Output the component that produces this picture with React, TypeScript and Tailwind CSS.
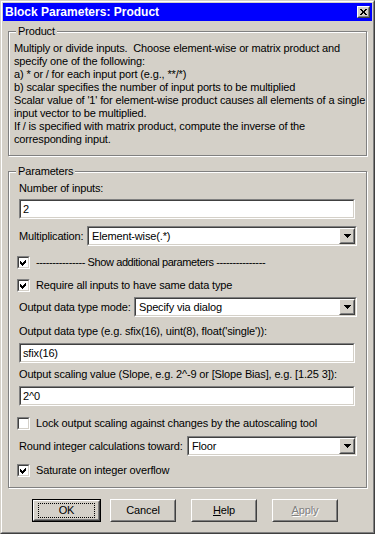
import React from "react";

const face = "bg-[#d4d0c8]";

function Sunken({ className = "", children }: { className?: string; children?: React.ReactNode }) {
  return (
    <div className={`border border-t-[#808080] border-l-[#808080] border-b-white border-r-white ${className}`}>
      <div className="h-full border border-t-[#404040] border-l-[#404040] border-b-[#d4d0c8] border-r-[#d4d0c8] bg-white">
        {children}
      </div>
    </div>
  );
}

function Raised({ className = "", children }: { className?: string; children?: React.ReactNode }) {
  return (
    <div className={`border border-t-white border-l-white border-b-[#404040] border-r-[#404040] ${face} ${className}`}>
      <div className="h-full border border-t-[#d4d0c8] border-l-[#d4d0c8] border-b-[#808080] border-r-[#808080]">
        {children}
      </div>
    </div>
  );
}

function GroupBox({ title, className = "", children }: { title: string; className?: string; children: React.ReactNode }) {
  return (
    <div className={`relative border border-[#808080] shadow-[inset_1px_1px_0_#fff,1px_1px_0_#fff] ${className}`}>
      <span className={`absolute -top-[7px] left-[7px] px-[2px] leading-[13px] ${face}`}>{title}</span>
      {children}
    </div>
  );
}

function TextField({ value }: { value: string }) {
  return (
    <Sunken className="mr-[2px] h-[20px]">
      <div className="pl-[2px] leading-[16px]">{value}</div>
    </Sunken>
  );
}

function Select({ value, width }: { value: string; width: string }) {
  return (
    <Sunken className={`h-[20px] shrink-0 ${width}`}>
      <div className="flex h-full items-center">
        <span className="flex-1 pl-[3px] leading-[16px]">{value}</span>
        <Raised className="h-[16px] w-[16px]">
          <div className="flex h-full items-center justify-center">
            <svg width="7" height="4" viewBox="0 0 7 4" shapeRendering="crispEdges">
              <path d="M0 0H7V1H6V2H5V3H4V4H3V3H2V2H1V1H0Z" fill="#000" />
            </svg>
          </div>
        </Raised>
      </div>
    </Sunken>
  );
}

function Check({ checked, label, className = "", labelClass = "" }: {
  checked: boolean; label: string; className?: string; labelClass?: string;
}) {
  return (
    <div className={`-ml-[2px] flex h-[13px] items-center ${className}`}>
      <Sunken className="h-[13px] w-[13px] shrink-0">
        {checked && (
          <svg width="9" height="9" viewBox="0 0 9 9" shapeRendering="crispEdges" className="block">
            <path d="M1 3H2V4H3V5H4V4H5V3H6V2H7V5H6V6H5V7H4V8H3V7H2V6H1Z" fill="#000" />
          </svg>
        )}
      </Sunken>
      <span className={`ml-[6px] whitespace-nowrap leading-[13px] ${labelClass}`}>{label}</span>
    </div>
  );
}

function Button({ children, isDefault = false, disabled = false, className = "" }: {
  children: React.ReactNode; isDefault?: boolean; disabled?: boolean; className?: string;
}) {
  const inner = (
    <Raised className="h-full w-full">
      <div className="flex h-full items-center justify-center">
        {isDefault ? (
          <span className="flex h-[15px] w-[57px] items-center justify-center border border-dotted border-black">{children}</span>
        ) : disabled ? (
          <span className="text-[#808080] [text-shadow:1px_1px_0_#fff]">{children}</span>
        ) : (
          <span>{children}</span>
        )}
      </div>
    </Raised>
  );
  return isDefault ? (
    <div className={`h-[23px] border border-black ${className}`}>{inner}</div>
  ) : (
    <div className={`h-[23px] ${className}`}>{inner}</div>
  );
}

export default function App() {
  const lines = [
    "Multiply or divide inputs.  Choose element-wise or matrix product and",
    "specify one of the following:",
    "a) * or / for each input port (e.g., **/*)",
    "b) scalar specifies the number of input ports to be multiplied",
    "Scalar value of '1' for element-wise product causes all elements of a single",
    "input vector to be multiplied.",
    "If / is specified with matrix product, compute the inverse of the",
    "corresponding input.",
  ];

  return (
    <div className={`h-[534px] w-[375px] overflow-hidden border border-t-[#d4d0c8] border-l-[#d4d0c8] border-b-[#404040] border-r-[#404040] ${face} font-['Liberation_Sans',Arial,sans-serif] text-[11px] tracking-[-0.15px] text-black`}>
      <div className="h-full border border-t-white border-l-white border-b-[#808080] border-r-[#808080] p-[1px]">
        <div className="flex h-[18px] items-center justify-between bg-[#0000ff] pl-[2px] pr-[2px]">
          <span className="text-[12px] font-bold tracking-normal text-white">Block Parameters: Product</span>
          <Raised className="h-[12px] w-[13px]">
            <div className="flex h-full items-center justify-center">
              <svg width="7" height="6" viewBox="0 0 7 6" shapeRendering="crispEdges">
                <path d="M0 0H2V1H3V2H4V1H5V0H7V1H6V2H5V4H6V5H7V6H5V5H4V4H3V5H2V6H0V5H1V4H2V2H1V1H0Z" fill="#000" />
              </svg>
            </div>
          </Raised>
        </div>

        <div className="px-[5px]">
          <GroupBox title="Product" className="mt-[10px] pb-[9px] pl-[5px] pt-[10px]">
            {lines.map((l, i) => (
              <div key={i} className="whitespace-pre leading-[13px]">{l}</div>
            ))}
          </GroupBox>

          <GroupBox title="Parameters" className="mt-[15px] pb-[10px] pl-[10px] pr-[9px] pt-[10px]">
            <div className="leading-[13px]">Number of inputs:</div>
            <div className="mt-[4px]"><TextField value="2" /></div>

            <div className="mt-[7px] flex items-center justify-between">
              <span className="whitespace-nowrap">Multiplication:</span>
              <Select value="Element-wise(.*)" width="w-[270px]" />
            </div>

            <Check
              checked
              className="mt-[10px]"
              labelClass="tracking-[-0.4px]"
              label="--------------- Show additional parameters ---------------"
            />
            <Check checked className="mt-[10px]" label="Require all inputs to have same data type" />

            <div className="mt-[5px] flex items-center justify-between">
              <span className="whitespace-nowrap">Output data type mode:</span>
              <Select value="Specify via dialog" width="w-[223px]" />
            </div>

            <div className="mt-[8px] whitespace-nowrap leading-[13px]">Output data type (e.g. sfix(16), uint(8), float('single')):</div>
            <div className="mt-[5px]"><TextField value="sfix(16)" /></div>

            <div className="mt-[5px] whitespace-nowrap leading-[13px]">Output scaling value (Slope, e.g. 2^-9 or [Slope Bias], e.g. [1.25 3]):</div>
            <div className="mt-[5px]"><TextField value="2^0" /></div>

            <Check checked={false} className="mt-[11px]" label="Lock output scaling against changes by the autoscaling tool" />

            <div className="mt-[6px] flex items-center justify-between">
              <span className="whitespace-nowrap">Round integer calculations toward:</span>
              <Select value="Floor" width="w-[170px]" />
            </div>

            <Check checked className="mt-[8px]" label="Saturate on integer overflow" />
          </GroupBox>

          <div className="mt-[11px] flex">
            <Button isDefault className="ml-[24px] w-[69px]">OK</Button>
            <Button className="ml-[9px] w-[66px]">Cancel</Button>
            <Button className="ml-[15px] w-[66px]"><span className="underline">H</span>elp</Button>
            <Button disabled className="ml-[15px] w-[66px]"><span className="underline">A</span>pply</Button>
          </div>
        </div>
      </div>
    </div>
  );
}
